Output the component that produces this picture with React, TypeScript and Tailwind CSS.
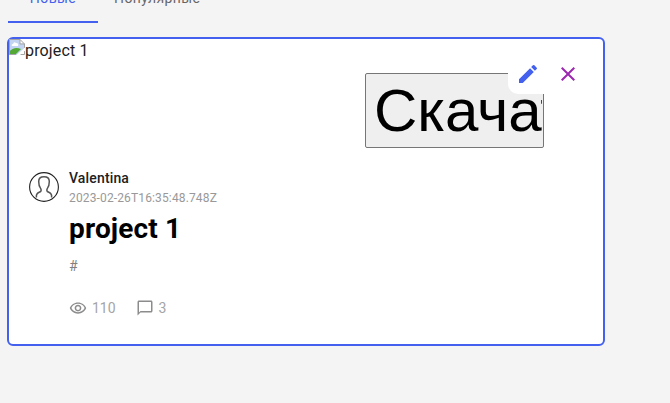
import React from "react";
import { MdClose, MdEdit, MdOutlineChatBubbleOutline, MdOutlineRemoveRedEye } from "react-icons/md";

function BrokenImage() {
  return (
    <svg width="16" height="16" viewBox="0 0 16 16" className="shrink-0">
      <path d="M0 0H11L15.5 4.5V10L9 16H0Z" fill="#c3d4f3" />
      <path d="M0 15V13Q5 7 12 10L7 15Z" fill="#54a936" />
      <path d="M3 7Q2 5 4 5Q5 2 7 4Q10 4 9 7Z" fill="#fff" />
      <path d="M11 0V4.5H15.5Z" fill="#fff" />
      <path d="M0 .5H11L15.5 5V9M11 .5V5H15.5M.5 0V15.5H7M11 15.5H15.5V12" fill="none" stroke="#a5a5a5" />
      <path d="M16 8.5L7.5 16H11L16 11.5Z" fill="#fff" />
    </svg>
  );
}

function Avatar() {
  return (
    <svg width="30" height="30" viewBox="0 0 30 30" fill="none" className="shrink-0">
      <circle cx="15" cy="15" r="14.4" stroke="#222" strokeWidth="1.1" />
      <path
        d="M7.5 25.5C6.8 22.5 8.2 21.2 10.2 20.3C12.4 19.3 12.6 18.2 11.6 16.4C10 14.4 9.7 12 9.7 9.5C9.7 6.3 11.3 4.8 15 4.8C18.7 4.8 20.3 6.3 20.3 9.5C20.3 12 20 14.4 18.4 16.4C17.4 18.2 17.6 19.3 19.8 20.3C21.8 21.2 23.2 22.5 22.5 25.5"
        stroke="#555"
        strokeWidth="1.5"
      />
    </svg>
  );
}

export default function App() {
  return (
    <div className="h-[403px] w-[670px] overflow-hidden bg-[#f4f4f4] font-[Roboto,sans-serif]">
      <nav className="flex h-[23px] items-end overflow-hidden pl-2 text-sm leading-[17.5px] tracking-[0.4px]">
        <div className="flex h-12 w-[90px] shrink-0 items-center justify-center border-b-2 border-[#4361ee] text-[#4361ee]">
          <span className="pt-[2px]">Новые</span>
        </div>
        <div className="flex h-12 shrink-0 items-center border-b-2 border-transparent px-4 text-[#666]">
          <span className="pt-[2px]">Популярные</span>
        </div>
      </nav>

      <article className="relative mt-[14px] ml-[7px] h-[309px] w-[598px] rounded-md border-2 border-[#4361ee] bg-white">
        <div className="flex h-[34px] items-start text-base leading-6 tracking-[0.15px] text-[#212121]">
          <BrokenImage />
          <span>project 1</span>
        </div>

        <button className="ml-[356px] block h-[75px] w-[179px] overflow-hidden rounded-[2px] border border-[#767676] bg-[#efefef] pl-2 text-left font-['Liberation_Sans',Arial,sans-serif] text-[60px] leading-[69px] text-black">
          <span className="-mt-px block w-[168px] overflow-hidden whitespace-nowrap">Скачать</span>
        </button>

        <div className="absolute top-[15px] left-[499px] flex h-10 w-20 rounded-[10px] bg-white">
          <span className="flex size-10 items-center justify-center text-[#4361ee]">
            <MdEdit size={24} />
          </span>
          <span className="flex size-10 items-center justify-center text-[#9c27b0]">
            <MdClose size={24} />
          </span>
        </div>

        <div className="flex gap-[10px] pt-[24px] pl-5">
          <Avatar />
          <div className="flex flex-col">
            <span className="-mt-1 h-5 text-sm leading-5 font-medium tracking-[0.15px] text-[#212121]">Valentina</span>
            <span className="h-5 text-xs leading-5 tracking-[0.14px] text-[#999]">2023-02-26T16:35:48.748Z</span>
            <h2 className="h-[42px] text-[28px] leading-[42px] font-bold tracking-[0.15px] text-black">project 1</h2>
            <span className="mt-1 h-6 text-sm leading-6 text-[#808080]">#</span>
            <div className="mt-[18px] flex h-6 items-center gap-5 text-sm text-[#a5a5a5]">
              <span className="flex items-center gap-[5px]">
                <MdOutlineRemoveRedEye size={18} className="text-[#8c8c8c]" />
                110
              </span>
              <span className="flex items-center gap-[5px]">
                <MdOutlineChatBubbleOutline size={18} className="text-[#8c8c8c]" />
                3
              </span>
            </div>
          </div>
        </div>
      </article>
    </div>
  );
}
